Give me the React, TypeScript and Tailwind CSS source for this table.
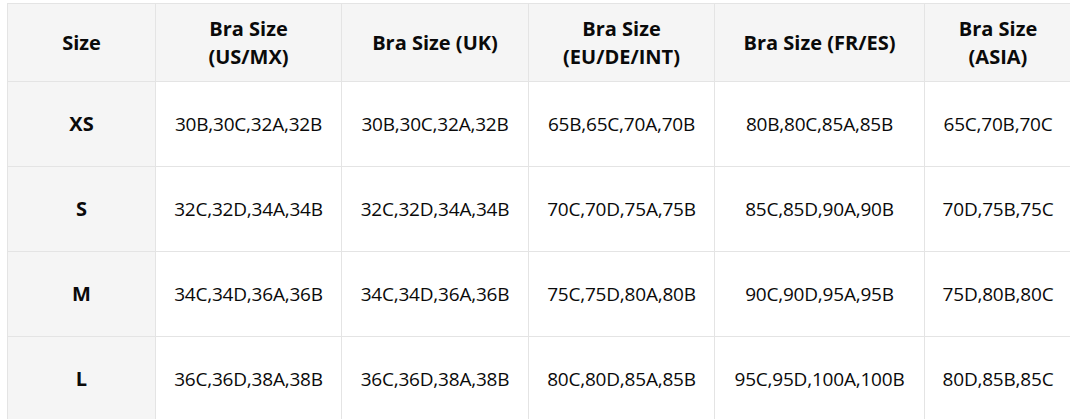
const headers = [
  ["Size"],
  ["Bra Size", "(US/MX)"],
  ["Bra Size (UK)"],
  ["Bra Size", "(EU/DE/INT)"],
  ["Bra Size (FR/ES)"],
  ["Bra Size", "(ASIA)"],
];

const rows = [
  ["XS", "30B,30C,32A,32B", "30B,30C,32A,32B", "65B,65C,70A,70B", "80B,80C,85A,85B", "65C,70B,70C"],
  ["S", "32C,32D,34A,34B", "32C,32D,34A,34B", "70C,70D,75A,75B", "85C,85D,90A,90B", "70D,75B,75C"],
  ["M", "34C,34D,36A,36B", "34C,34D,36A,36B", "75C,75D,80A,80B", "90C,90D,95A,95B", "75D,80B,80C"],
  ["L", "36C,36D,38A,38B", "36C,36D,38A,38B", "80C,80D,85A,85B", "95C,95D,100A,100B", "80D,85B,85C"],
];

export default function App() {
  return (
    <div className="w-[1070px] h-[419px] overflow-hidden bg-white pl-[7px] pt-[3px] font-['Open_Sans',sans-serif] text-[#0a0a0a]">
      <table className="table-fixed border-collapse w-[1064px]">
        <colgroup>
          <col className="w-[148px]" />
          <col className="w-[186px]" />
          <col className="w-[187px]" />
          <col className="w-[186px]" />
          <col className="w-[210px]" />
          <col className="w-[147px]" />
        </colgroup>
        <thead>
          <tr className="h-[78px] bg-[#f5f5f5]">
            {headers.map((h, i) => (
              <th
                key={i}
                className="border border-[#e4e4e4] text-center align-middle font-bold text-[20px] leading-[28px]"
              >
                {h.map((line) => (
                  <div key={line}>{line}</div>
                ))}
              </th>
            ))}
          </tr>
        </thead>
        <tbody>
          {rows.map((r) => (
            <tr key={r[0]} className="h-[85px]">
              {r.map((cell, i) => (
                <td
                  key={i}
                  className={`border border-[#e4e4e4] text-center align-middle whitespace-nowrap ${
                    i === 0 ? "bg-[#f5f5f5] font-bold text-[20px]" : "bg-white text-[19px] tracking-[-0.2px]"
                  }`}
                >
                  {cell}
                </td>
              ))}
            </tr>
          ))}
        </tbody>
      </table>
    </div>
  );
}
